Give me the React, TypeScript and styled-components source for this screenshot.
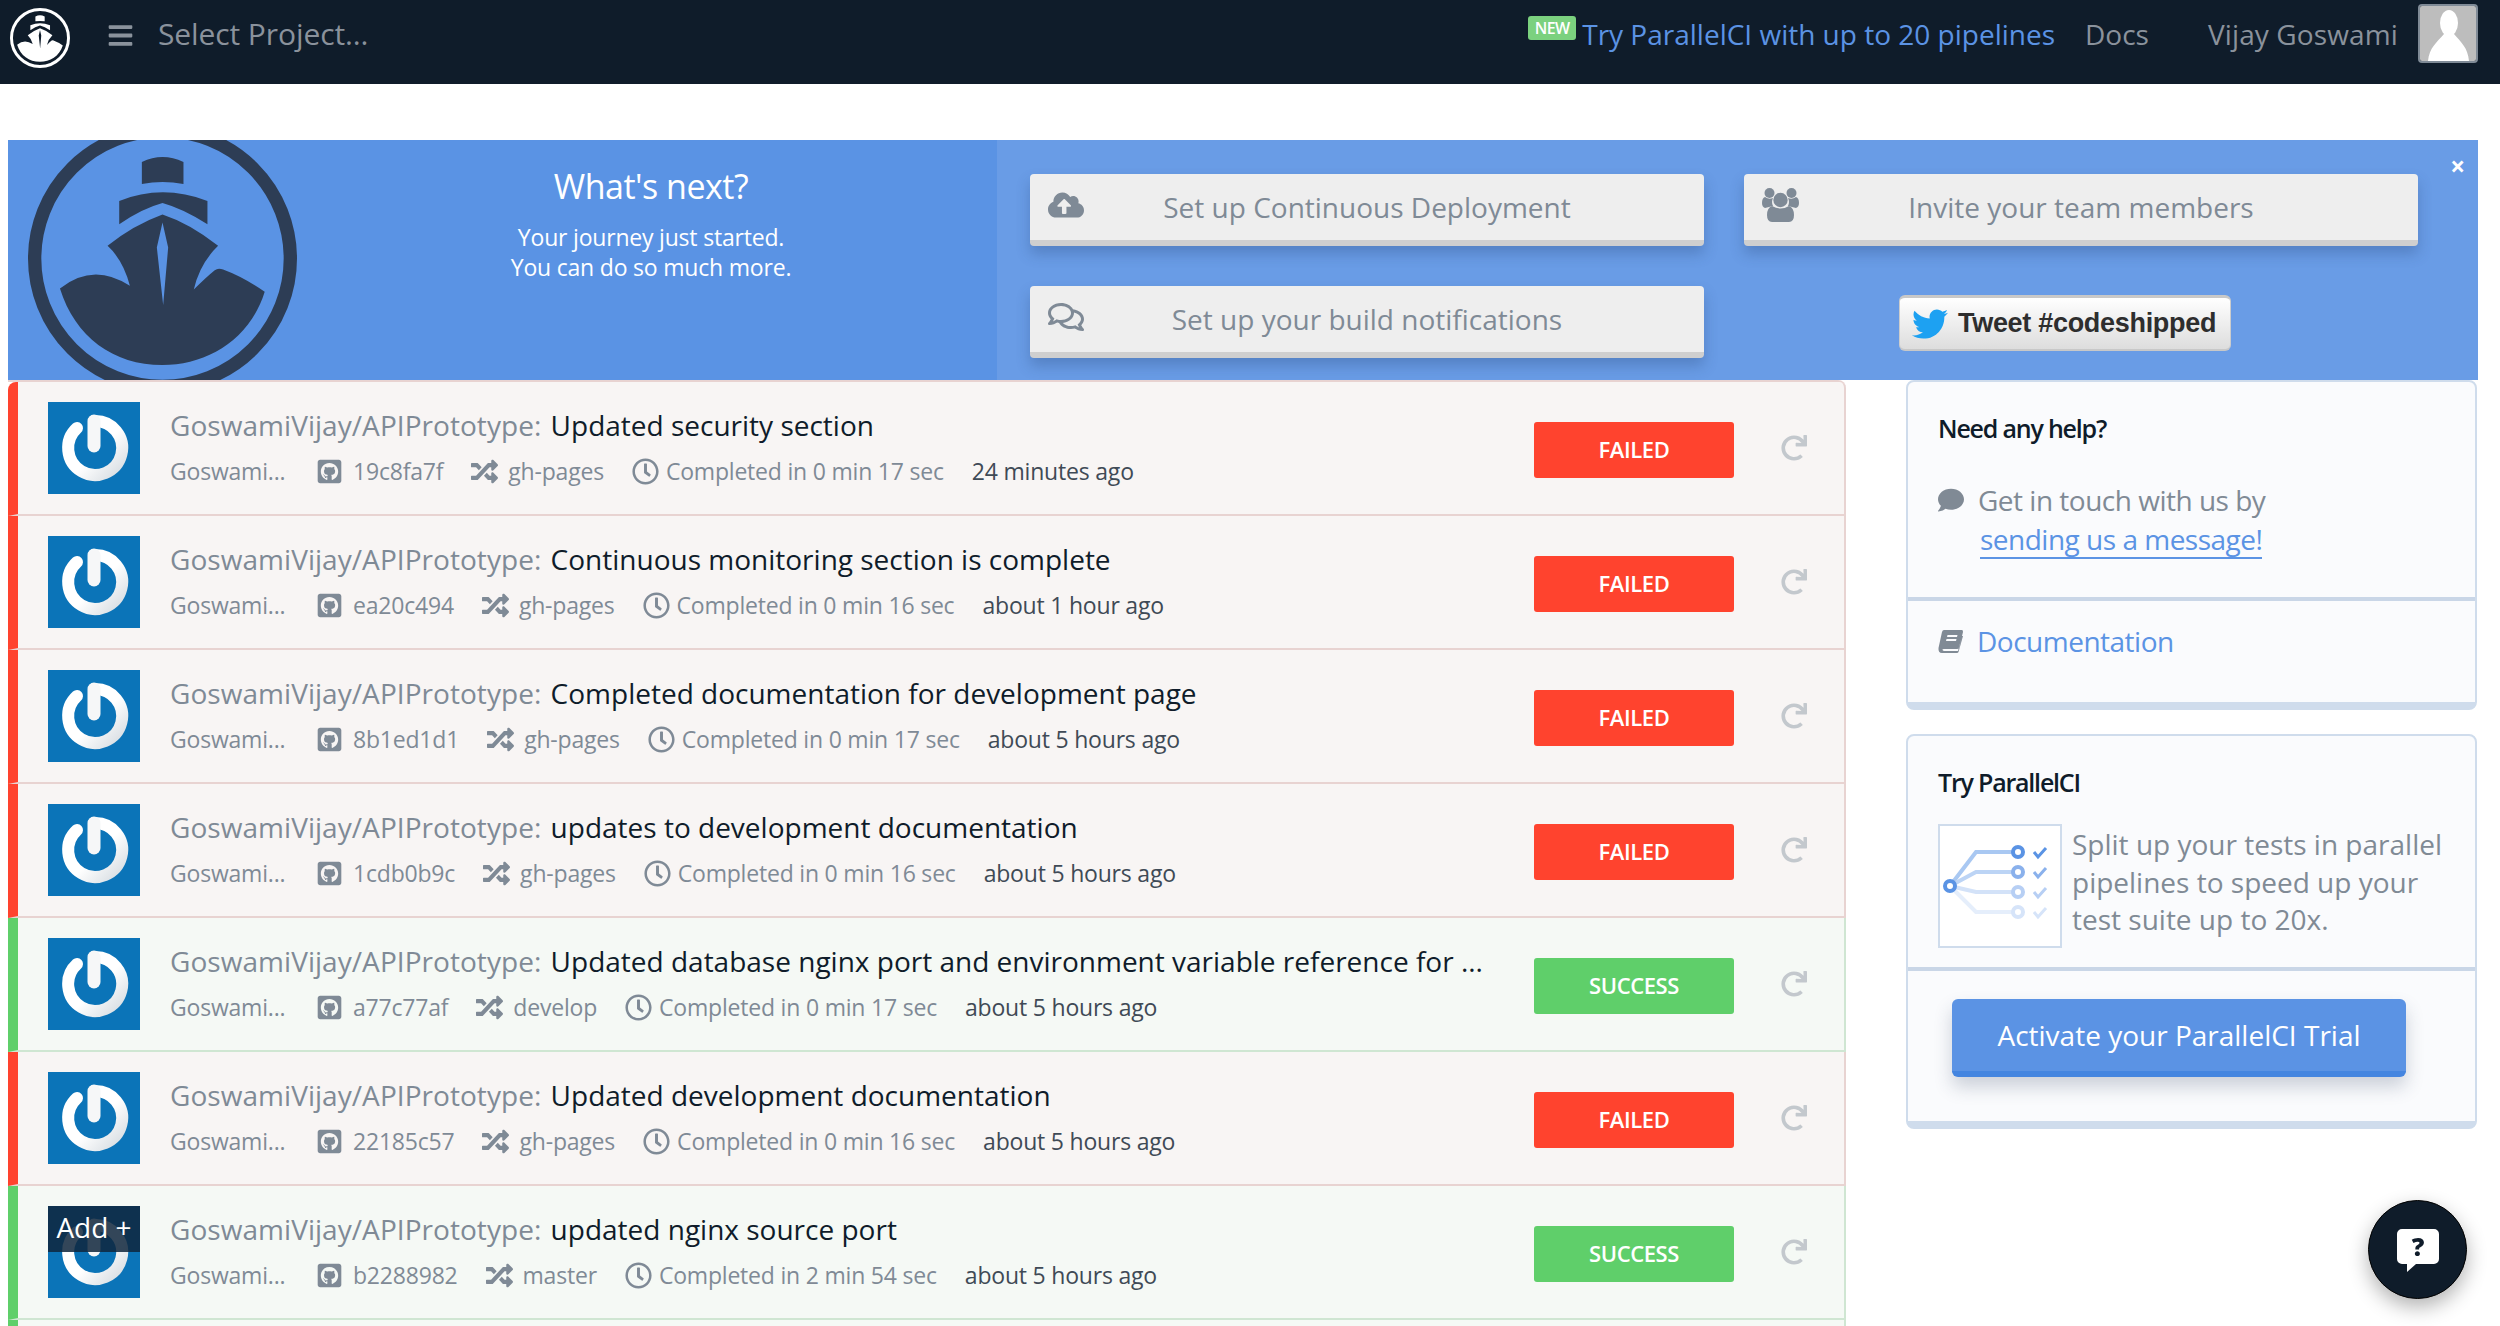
import * as React from 'react';
import styled, { createGlobalStyle } from 'styled-components';
import {
  FaBars,
  FaCloudUploadAlt,
  FaComment,
  FaGithubSquare,
  FaRandom,
  FaRedo,
  FaRegClock,
  FaRegComments,
  FaTwitter,
} from 'react-icons/fa';

const GlobalStyle = createGlobalStyle`
  html, body {
    margin: 0;
    padding: 0;
    background: #fff;
    height: 100%;
    overflow: hidden;
    font-family: 'Open Sans', 'Liberation Sans', sans-serif;
  }
`;

const builds = [
  { status: 'failed', title: 'Updated security section', hash: '19c8fa7f', branch: 'gh-pages', time: '0 min 17 sec', ago: '24 minutes ago' },
  { status: 'failed', title: 'Continuous monitoring section is complete', hash: 'ea20c494', branch: 'gh-pages', time: '0 min 16 sec', ago: 'about 1 hour ago' },
  { status: 'failed', title: 'Completed documentation for development page', hash: '8b1ed1d1', branch: 'gh-pages', time: '0 min 17 sec', ago: 'about 5 hours ago' },
  { status: 'failed', title: 'updates to development documentation', hash: '1cdb0b9c', branch: 'gh-pages', time: '0 min 16 sec', ago: 'about 5 hours ago' },
  { status: 'success', title: 'Updated database nginx port and environment variable reference for ...', hash: 'a77c77af', branch: 'develop', time: '0 min 17 sec', ago: 'about 5 hours ago' },
  { status: 'failed', title: 'Updated development documentation', hash: '22185c57', branch: 'gh-pages', time: '0 min 16 sec', ago: 'about 5 hours ago' },
  { status: 'success', title: 'updated nginx source port', hash: 'b2288982', branch: 'master', time: '2 min 54 sec', ago: 'about 5 hours ago', add: true },
];

const ShipLogo = ({ color, size }: { color: string; size: number }) => (
  <svg width={size} height={size} viewBox="84 -19 808 808" style={{ flexShrink: 0, display: 'block' }}>
    <circle cx="488" cy="385" r="384" fill="none" stroke={color} strokeWidth="40" />
    <path fill={color} d="M426 95 Q488 65 551 95 L551 161 Q488 150 426 161 Z" />
    <path fill={color} d="M358 212 Q488 160 623 212 L623 282 Q550 235 488 218 Q425 235 358 282 Z" />
    <path
      fill={color}
      fillRule="evenodd"
      d="M488 253 Q570 280 655 347 Q600 400 582 478 Q620 440 645 420 Q655 412 670 418 Q730 440 795 485 C750 630 620 705 488 705 C340 705 225 620 180 475 Q280 395 390 467 Q370 390 323 347 Q400 285 488 253 Z M488 277 L505 352 L490 525 L471 352 Z"
    />
  </svg>
);

const PowerAvatar = ({ id }: { id: number }) => (
  <svg width="92" height="92" viewBox="0 0 92 92" style={{ display: 'block' }}>
    <defs>
      <linearGradient id={`ringShade${id}`} gradientUnits="userSpaceOnUse" x1="14" y1="14" x2="78" y2="78">
        <stop offset="0.55" stopColor="#ffffff" />
        <stop offset="1" stopColor="#cfd6dc" />
      </linearGradient>
    </defs>
    <rect width="92" height="92" fill="#0b74b8" />
    <path
      d="M29 26 A27 27 0 1 0 46 19"
      fill="none"
      stroke={`url(#ringShade${id})`}
      strokeWidth="12"
      strokeLinecap="round"
    />
    <path d="M46 19 L46 44" fill="none" stroke="#f6f7f8" strokeWidth="13" strokeLinecap="round" />
  </svg>
);

const UserPicture = () => (
  <svg width="56" height="55" viewBox="0 0 56 55" style={{ display: 'block' }}>
    <rect width="56" height="55" fill="#bdbdbd" />
    <ellipse cx="29" cy="17" rx="9" ry="13" fill="#fff" />
    <path d="M8 55 C9 42 17 36 24 28 L34 28 C41 36 48 42 49 55 Z" fill="#fff" />
  </svg>
);

const TeamIcon = () => (
  <svg width="37" height="34" viewBox="0 0 37 34" fill="currentColor">
    <circle cx="7.5" cy="5" r="5" />
    <circle cx="29.5" cy="5" r="5" />
    <path d="M0 15 Q0 10 3 9 Q7 12 11 10 Q9 14 11 18 L3 20 Q0 19 0 15 Z" />
    <path d="M37 15 Q37 10 34 9 Q30 12 26 10 Q28 14 26 18 L34 20 Q37 19 37 15 Z" />
    <circle cx="18.5" cy="12" r="7.2" />
    <path d="M5 27 Q5 20 10 18 Q18.5 23 27 18 Q32 20 32 27 Q32 34 27 34 H10 Q5 34 5 27 Z" />
  </svg>
);

const BookIcon = () => (
  <svg width="25" height="23" viewBox="0 0 25 23" fill="currentColor">
    <path d="M6 0 H24 Q25 0 25 2 L21 18 Q20.5 19 19 19 H6 Q4 19 4.5 20 Q5 21 6.5 21 H20 L24 6 L25 6 L20.5 22 Q20 23 19 23 H4 Q0 23 0.5 18 L4 2 Q4.5 0 6 0 Z M9.5 5 L9 7 H19 L19.5 5 Z M8.5 9 L8 11 H18 L18.5 9 Z" fillRule="evenodd" />
  </svg>
);

const PipelineArt = () => (
  <svg width="120" height="120" viewBox="0 0 120 120">
    <g fill="none" strokeWidth="4">
      <path d="M10 60 L36 26 H72" stroke="#a9c8f2" />
      <path d="M10 60 L36 46 H72" stroke="#bcd4f5" />
      <path d="M10 60 L36 66 H72" stroke="#d3e2f8" />
      <path d="M10 60 L36 86 H72" stroke="#e5eefb" />
      <circle cx="10" cy="60" r="5" stroke="#5a93e4" fill="#fff" />
      <circle cx="78" cy="26" r="5" stroke="#5a93e4" fill="#fff" />
      <circle cx="78" cy="46" r="5" stroke="#8ab1ec" fill="#fff" />
      <circle cx="78" cy="66" r="5" stroke="#b7cff4" fill="#fff" />
      <circle cx="78" cy="86" r="5" stroke="#d6e4f9" fill="#fff" />
      <path d="M94 26 l4 5 l8 -9" stroke="#5a93e4" strokeWidth="3" />
      <path d="M94 46 l4 5 l8 -9" stroke="#8ab1ec" strokeWidth="3" />
      <path d="M94 66 l4 5 l8 -9" stroke="#b7cff4" strokeWidth="3" />
      <path d="M94 86 l4 5 l8 -9" stroke="#d6e4f9" strokeWidth="3" />
    </g>
  </svg>
);

const App: React.FC = () => {
  return (
    <>
      <GlobalStyle />
      <TopBar>
        <LogoLink>
          <ShipLogo color="#fff" size={60} />
        </LogoLink>
        <MenuIcon>
          <FaBars />
        </MenuIcon>
        <ProjectSelect>Select Project...</ProjectSelect>
        <TopNav>
          <NewBadge>NEW</NewBadge>
          <PromoLink>Try ParallelCI with up to 20 pipelines</PromoLink>
          <DocsLink>Docs</DocsLink>
          <UserName>Vijay Goswami</UserName>
          <UserFrame>
            <UserPicture />
          </UserFrame>
        </TopNav>
      </TopBar>

      <Banner>
        <BannerLeft>
          <BannerLogo>
            <ShipLogo color="#2d3d55" size={269} />
          </BannerLogo>
          <BannerCopy>
            <BannerTitle>What's next?</BannerTitle>
            <BannerText>
              Your journey just started.
              <br />
              You can do so much more.
            </BannerText>
          </BannerCopy>
        </BannerLeft>
        <BannerRight>
          <NextStep>
            <StepIcon>
              <FaCloudUploadAlt />
            </StepIcon>
            Set up Continuous Deployment
          </NextStep>
          <NextStep>
            <StepIcon>
              <TeamIcon />
            </StepIcon>
            Invite your team members
          </NextStep>
          <NextStep>
            <StepIcon>
              <FaRegComments />
            </StepIcon>
            Set up your build notifications
          </NextStep>
          <TweetCell>
            <TweetButton>
              <FaTwitter color="#1da1f2" size={36} />
              Tweet #codeshipped
            </TweetButton>
          </TweetCell>
          <CloseBanner>×</CloseBanner>
        </BannerRight>
      </Banner>

      <Content>
        <BuildList>
          {builds.map((b, i) => (
            <BuildRow key={i} $status={b.status}>
              <AvatarBox>
                <PowerAvatar id={i} />
                {b.add && <AddOverlay>Add +</AddOverlay>}
              </AvatarBox>
              <BuildInfo>
                <BuildTitle>
                  <RepoName>GoswamiVijay/APIPrototype:</RepoName> {b.title}
                </BuildTitle>
                <BuildMeta>
                  <Author>Goswami...</Author>
                  <MetaItem>
                    <FaGithubSquare />
                    {b.hash}
                  </MetaItem>
                  <MetaItem>
                    <FaRandom />
                    {b.branch}
                  </MetaItem>
                  <MetaItem $gap={7}>
                    <FaRegClock />
                    Completed in {b.time}
                  </MetaItem>
                  <Ago>{b.ago}</Ago>
                </BuildMeta>
              </BuildInfo>
              <StatusBadge $status={b.status}>{b.status}</StatusBadge>
              <Retry>
                <FaRedo />
              </Retry>
            </BuildRow>
          ))}
          <NextRowEdge />
        </BuildList>

        <Sidebar>
          <Card>
            <CardSection>
              <CardTitle>Need any help?</CardTitle>
              <HelpLine>
                <FaComment />
                Get in touch with us by
              </HelpLine>
              <MessageLink>sending us a message!</MessageLink>
            </CardSection>
            <DocsSection>
              <HelpLine>
                <BookIcon />
                <BlueText>Documentation</BlueText>
              </HelpLine>
            </DocsSection>
          </Card>
          <Card>
            <TrySection>
              <CardTitle>Try ParallelCI</CardTitle>
              <TryBody>
                <ArtFrame>
                  <PipelineArt />
                </ArtFrame>
                <TryText>Split up your tests in parallel pipelines to speed up your test suite up to 20x.</TryText>
              </TryBody>
            </TrySection>
            <ActivateSection>
              <ActivateButton>Activate your ParallelCI Trial</ActivateButton>
            </ActivateSection>
          </Card>
        </Sidebar>
      </Content>

      <HelpBubble>
        <svg width="46" height="46" viewBox="0 0 46 46">
          <path
            fill="#fff"
            d="M7 2 H39 A5 5 0 0 1 44 7 V32 A5 5 0 0 1 39 37 H21 L12 45 V37 H7 A5 5 0 0 1 2 32 V7 A5 5 0 0 1 7 2 Z"
          />
          <text x="23" y="29" textAnchor="middle" fontSize="25" fontWeight="800" fill="#0f1c2a" fontFamily="Open Sans">
            ?
          </text>
        </svg>
      </HelpBubble>
    </>
  );
};

const TopBar = styled.header`
  display: flex;
  align-items: center;
  height: 84px;
  background: #0f1c2a;
  padding: 0 22px 0 10px;
  box-sizing: border-box;
  font-size: 28px;
`;

const LogoLink = styled.div`
  margin-top: -8px;
`;

const MenuIcon = styled.div`
  display: flex;
  margin: -14px 0 0 37px;
  color: #8a929c;
  font-size: 27px;
`;

const ProjectSelect = styled.div`
  margin: -17px 0 0 24px;
  color: #8a929c;
  font-size: 30px;
  letter-spacing: -0.1px;
`;

const TopNav = styled.nav`
  display: flex;
  align-items: center;
  margin-left: auto;
  margin-top: -17px;
`;

const NewBadge = styled.span`
  background: #7bd17f;
  color: #fff;
  font-size: 16px;
  font-weight: 600;
  line-height: 24px;
  height: 24px;
  width: 48px;
  text-align: center;
  border-radius: 3px;
  letter-spacing: -0.6px;
  margin: -11px 6px 0 0;
`;

const PromoLink = styled.span`
  color: #5b93e4;
`;

const DocsLink = styled.span`
  color: #8a929c;
  margin-left: 30px;
`;

const UserName = styled.span`
  color: #8a929c;
  margin-left: 59px;
  letter-spacing: 0.12px;
`;

const UserFrame = styled.div`
  margin-left: 20px;
  border: 2px solid #7f8a96;
  border-radius: 4px;
  overflow: hidden;
`;

const Banner = styled.section`
  display: flex;
  height: 240px;
  width: 2470px;
  margin: 56px 0 0 8px;
  overflow: hidden;
`;

const BannerLeft = styled.div`
  display: flex;
  align-items: center;
  width: 989px;
  background: #5a93e4;
  overflow: hidden;
`;

const BannerLogo = styled.div`
  margin: -4px 0 0 20px;
`;

const BannerCopy = styled.div`
  flex: 1;
  align-self: flex-start;
  text-align: center;
  color: #fff;
  padding: 22px 0 0 8px;
`;

const BannerTitle = styled.div`
  font-size: 34px;
  line-height: 48px;
  letter-spacing: -0.5px;
`;

const BannerText = styled.div`
  font-size: 23px;
  line-height: 30px;
  margin-top: 12px;
  letter-spacing: -0.2px;
`;

const BannerRight = styled.div`
  position: relative;
  flex: 1;
  display: grid;
  grid-template-columns: 674px 674px;
  grid-auto-rows: 72px;
  column-gap: 40px;
  row-gap: 40px;
  padding: 34px 0 0 33px;
  background: #699ce6;
`;

const NextStep = styled.div`
  position: relative;
  display: flex;
  align-items: center;
  justify-content: center;
  box-sizing: border-box;
  background: #eeeeee;
  border-bottom: 6px solid #cfcfcf;
  border-radius: 4px;
  color: #7f8a96;
  font-size: 28px;
  box-shadow: 0 8px 14px rgba(40, 70, 120, 0.3);
`;

const StepIcon = styled.span`
  position: absolute;
  left: 18px;
  top: 0;
  bottom: 4px;
  display: flex;
  align-items: center;
  font-size: 36px;
`;

const TweetCell = styled.div`
  display: flex;
  justify-content: center;
  align-items: center;
`;

const TweetButton = styled.div`
  display: flex;
  align-items: center;
  gap: 10px;
  box-sizing: border-box;
  width: 332px;
  height: 56px;
  margin: 2px 32px 0 0;
  padding-left: 12px;
  background: linear-gradient(#ffffff, #dddddd);
  border-top: 3px solid #c8c8c8;
  border-bottom: 2px solid #c8c8c8;
  border-left: 1px solid #ccc;
  border-right: 1px solid #ccc;
  border-radius: 6px;
  color: #2e2e2e;
  font-family: 'Liberation Sans', sans-serif;
  font-weight: 700;
  font-size: 27px;
  letter-spacing: -0.3px;
  white-space: nowrap;
`;

const CloseBanner = styled.span`
  position: absolute;
  top: 8px;
  right: 13px;
  color: #fff;
  font-size: 26px;
  font-weight: 700;
  line-height: 36px;
`;

const Content = styled.main`
  display: flex;
  align-items: flex-start;
  margin-left: 8px;
`;

const BuildList = styled.div`
  width: 1838px;
  border-top: 2px solid #e8d3d1;
  border-top-right-radius: 8px;
  flex-shrink: 0;
`;

const BuildRow = styled.div<{ $status: string }>`
  display: flex;
  box-sizing: border-box;
  height: 134px;
  padding: 20px 0 0 30px;
  background: ${(p) => (p.$status === 'failed' ? '#f8f5f4' : '#f5f9f5')};
  border-left: 10px solid ${(p) => (p.$status === 'failed' ? '#ff432e' : '#5fcf6a')};
  border-right: 2px solid ${(p) => (p.$status === 'failed' ? '#e8d3d1' : '#cfe6d2')};
  border-bottom: 2px solid ${(p) => (p.$status === 'failed' ? '#e8d3d1' : '#cfe6d2')};

  &:first-child {
    border-top-left-radius: 8px;
    border-top-right-radius: 6px;
  }
`;

const NextRowEdge = styled.div`
  height: 6px;
  background: #f5f9f5;
  border-left: 10px solid #5fcf6a;
  border-right: 2px solid #cfe6d2;
`;

const AvatarBox = styled.div`
  position: relative;
  width: 92px;
  height: 92px;
  flex-shrink: 0;
`;

const AddOverlay = styled.div`
  position: absolute;
  top: 0;
  left: 0;
  right: 0;
  height: 46px;
  background: rgba(15, 38, 60, 0.85);
  color: #fff;
  font-size: 28px;
  line-height: 42px;
  text-align: center;
`;

const BuildInfo = styled.div`
  flex: 1;
  min-width: 0;
  margin-left: 30px;
`;

const BuildTitle = styled.div`
  font-size: 28px;
  line-height: 40px;
  margin-top: 3px;
  color: #0f1c2a;
  white-space: nowrap;
`;

const RepoName = styled.span`
  color: #7f8a96;
  letter-spacing: 0.05px;
  margin-right: 2px;
`;

const BuildMeta = styled.div`
  display: flex;
  align-items: center;
  gap: 28px;
  margin-top: 10px;
  font-size: 23px;
  line-height: 32px;
  color: #7f8a96;
  white-space: nowrap;
  letter-spacing: -0.2px;
`;

const Author = styled.span`
  width: 118px;
`;

const MetaItem = styled.span<{ $gap?: number }>`
  display: flex;
  align-items: center;
  gap: ${(p) => p.$gap ?? 10}px;

  svg {
    font-size: 27px;
  }
`;

const Ago = styled.span`
  color: #3f4a56;
`;

const StatusBadge = styled.div<{ $status: string }>`
  width: 200px;
  height: 56px;
  margin: 20px 0 0 13px;
  flex-shrink: 0;
  border-radius: 3px;
  background: ${(p) => (p.$status === 'failed' ? '#ff432e' : '#5fcf6a')};
  color: #fff;
  font-size: 22px;
  font-weight: 600;
  line-height: 54px;
  text-align: center;
  text-transform: uppercase;
  letter-spacing: -0.4px;
`;

const Retry = styled.div`
  display: flex;
  width: 63px;
  margin: 33px 0 0 47px;
  color: #c3c8cd;
  font-size: 26px;
  flex-shrink: 0;
`;

const Sidebar = styled.aside`
  display: flex;
  flex-direction: column;
  gap: 24px;
  width: 571px;
  margin-left: 60px;
`;

const Card = styled.div`
  box-sizing: border-box;
  background: #fafbfd;
  border: 2px solid #cfdcec;
  border-bottom-width: 8px;
  border-radius: 8px;
`;

const CardSection = styled.div`
  box-sizing: border-box;
  height: 219px;
  padding: 29px 0 0 30px;
  border-bottom: 4px solid #c9d6e7;
`;

const CardTitle = styled.div`
  font-size: 25px;
  font-weight: 600;
  line-height: 34px;
  color: #0f1c2a;
  letter-spacing: -1.2px;
`;

const HelpLine = styled.div`
  display: flex;
  align-items: center;
  gap: 14px;
  margin-top: 35px;
  font-size: 28px;
  line-height: 40px;
  color: #808a95;
  letter-spacing: -0.5px;

  > svg {
    font-size: 26px;
  }
`;

const MessageLink = styled.span`
  display: inline-block;
  margin: 1px 0 0 42px;
  color: #5b93e4;
  font-size: 28px;
  line-height: 36px;
  border-bottom: 2px solid #5b93e4;
  letter-spacing: -0.5px;
`;

const DocsSection = styled.div`
  box-sizing: border-box;
  height: 101px;
  padding: 20px 0 0 30px;

  ${HelpLine} {
    margin-top: 0;
  }
`;

const BlueText = styled.span`
  color: #5b93e4;
`;

const TrySection = styled.div`
  box-sizing: border-box;
  height: 235px;
  padding: 29px 0 0 30px;
  border-bottom: 4px solid #c9d6e7;
`;

const TryBody = styled.div`
  display: flex;
  gap: 10px;
  margin-top: 25px;
`;

const ArtFrame = styled.div`
  display: flex;
  width: 124px;
  height: 124px;
  box-sizing: border-box;
  background: #fff;
  border: 2px solid #cfdcec;
  flex-shrink: 0;
`;

const TryText = styled.p`
  margin: 2px 0 0;
  width: 385px;
  font-size: 28px;
  line-height: 37.5px;
  color: #808a95;
`;

const ActivateSection = styled.div`
  height: 150px;
  padding: 28px 0 0 44px;
  box-sizing: border-box;
`;

const ActivateButton = styled.div`
  box-sizing: border-box;
  width: 454px;
  height: 78px;
  background: #5b93e4;
  border-bottom: 6px solid #4485e0;
  border-radius: 6px;
  color: #fff;
  font-size: 28px;
  line-height: 72px;
  text-align: center;
  box-shadow: 0 10px 18px rgba(40, 60, 90, 0.22);
`;

const HelpBubble = styled.div`
  position: fixed;
  left: 2368px;
  top: 1200px;
  display: flex;
  align-items: center;
  justify-content: center;
  box-sizing: border-box;
  width: 99px;
  height: 99px;
  border-radius: 50%;
  background: #0f1c2a;
  border: 1px solid #000;
  box-shadow: 0 8px 20px rgba(0, 0, 0, 0.3);
`;

export default App;
